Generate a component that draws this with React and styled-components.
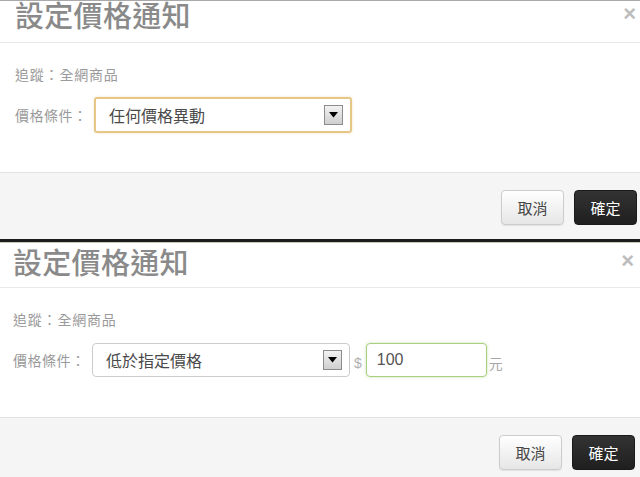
import React from 'react';
import styled, { createGlobalStyle } from 'styled-components';

const Global = createGlobalStyle`
  html, body {
    margin: 0;
    padding: 0;
    background: #ffffff;
    overflow: hidden;
  }
  body {
    font-family: "Noto Sans CJK TC", "Liberation Sans", sans-serif;
  }
`;

const Page = styled.div`
  width: 640px;
  height: 477px;
  display: flex;
  flex-direction: column;
  overflow: hidden;
`;

const Panel = styled.div`
  display: flex;
  flex-direction: column;
  flex-shrink: 0;
  background: #fff;
  border-top: ${p => (p.$first ? '1px solid #a9a9a9' : 'none')};
`;

const Header = styled.div`
  height: ${p => p.$h}px;
  display: flex;
  align-items: flex-end;
  justify-content: space-between;
  padding: 0 ${p => p.$right + 1}px 0 ${p => p.$left}px;
  border-bottom: 1px solid #e8e8e8;
  box-sizing: border-box;
`;

const Title = styled.h3`
  margin: 0 0 ${p => p.$bottom}px;
  font-size: 29px;
  line-height: 1;
  font-weight: 500;
  color: #8a8a8a;
  letter-spacing: 0.3px;
`;

const Close = styled.span`
  align-self: flex-start;
  margin-top: ${p => p.$top}px;
  font-family: "Liberation Sans", Arial, sans-serif;
  font-size: 22px;
  font-weight: bold;
  line-height: 1;
  color: #bdbdbd;
`;

const Body = styled.div`
  height: 130px;
  box-sizing: border-box;
  padding: 20px 10px 0 ${p => p.$left}px;
  border-bottom: 1px solid #e2e2e2;
`;

const Track = styled.div`
  font-size: 14px;
  line-height: 22px;
  color: #9a9a9a;
  letter-spacing: 0.8px;
  margin-bottom: ${p => p.$gap}px;
`;

const Row = styled.div`
  display: flex;
  align-items: center;
`;

const Label = styled.span`
  width: 79px;
  flex-shrink: 0;
  font-size: 14px;
  color: #9a9a9a;
  letter-spacing: 0.5px;
`;

const Select = styled.div`
  width: 258px;
  height: ${p => (p.$focus ? 36 : 34)}px;
  box-sizing: border-box;
  display: flex;
  align-items: center;
  justify-content: space-between;
  padding: 0 7px 0 13px;
  border-radius: ${p => (p.$focus ? 3 : 4)}px;
  border: ${p => (p.$focus ? '2px solid #e6c787' : '1px solid #cccccc')};
  box-shadow: ${p => (p.$focus ? '0 0 2px rgba(225, 180, 90, 0.5)' : 'none')};
  font-size: 16px;
  color: #4a4a4a;
`;

const Arrow = styled.span`
  width: 19px;
  height: 20px;
  box-sizing: border-box;
  display: flex;
  align-items: center;
  justify-content: center;
  border: 1px solid #8c8c8c;
  background: linear-gradient(#f2f2f2, #cfcfcf);
`;

const Dollar = styled.span`
  margin: 6px 4px 0 4px;
  font-family: "Liberation Sans", Arial, sans-serif;
  font-size: 14px;
  color: #b0b0b0;
`;

const Amount = styled.div`
  width: 121px;
  height: 34px;
  box-sizing: border-box;
  display: flex;
  align-items: center;
  padding-left: 10px;
  border: 1px solid #a6cf80;
  border-radius: 4px;
  box-shadow: 0 0 3px rgba(150, 200, 100, 0.5);
  font-family: "Liberation Sans", Arial, sans-serif;
  font-size: 16px;
  color: #555;
`;

const Unit = styled.span`
  margin: 6px 0 0 2px;
  font-size: 14px;
  color: #a8a8a8;
`;

const Footer = styled.div`
  height: 66px;
  box-sizing: border-box;
  display: flex;
  justify-content: flex-end;
  gap: 10px;
  padding: 17px ${p => p.$right}px 0 0;
  background: #f5f5f5;
`;

const Button = styled.button`
  width: 63px;
  height: 35px;
  border-radius: 4px;
  font-family: "Noto Sans CJK TC", sans-serif;
  font-size: 15px;
  padding: 0;
  border: 1px solid ${p => (p.$primary ? '#1a1a1a' : '#cccccc')};
  background: ${p => (p.$primary ? 'linear-gradient(#333, #1f1f1f)' : 'linear-gradient(#ffffff, #e6e6e6)')};
  color: ${p => (p.$primary ? '#fff' : '#444')};
  box-shadow: ${p => (p.$primary ? 'none' : '0 1px 1px rgba(0,0,0,0.08)')};
`;

const Divider = styled.div`
  height: 3px;
  flex-shrink: 0;
  background: #1c1c1c;
  border-bottom: 1px solid #c3c9b6;
`;

const TriangleIcon = () => (
  <svg width="9" height="6" viewBox="0 0 9 6">
    <path d="M0 0 H9 L4.5 5.5 Z" fill="#000" />
  </svg>
);

const Dialog = ({ first, option, left, right, children }) => (
  <Panel $first={first}>
    <Header $h={first ? 42 : 45} $left={left} $right={right}>
      <Title $bottom={first ? 13 : 11}>設定價格通知</Title>
      <Close $top={first ? 2 : 7}>×</Close>
    </Header>
    <Body $left={left}>
      <Track $gap={first ? 12 : 13}>追蹤：全網商品</Track>
      <Row>
        <Label>價格條件：</Label>
        <Select $focus={first}>
          <span>{option}</span>
          <Arrow>
            <TriangleIcon />
          </Arrow>
        </Select>
        {children}
      </Row>
    </Body>
    <Footer $right={right}>
      <Button>取消</Button>
      <Button $primary>確定</Button>
    </Footer>
  </Panel>
);

export default function App() {
  return (
    <Page>
      <Global />
      <Dialog first option="任何價格異動" left={15} right={3} />
      <Divider />
      <Dialog option="低於指定價格" left={13} right={5}>
        <Dollar>$</Dollar>
        <Amount>100</Amount>
        <Unit>元</Unit>
      </Dialog>
    </Page>
  );
}
